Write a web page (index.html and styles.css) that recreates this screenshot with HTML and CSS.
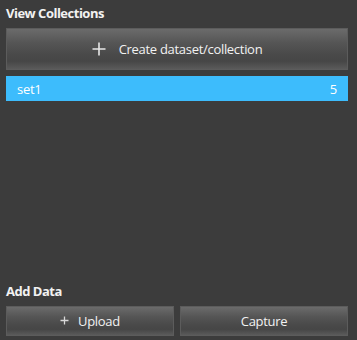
FILE: index.html
```html
<!DOCTYPE html>
<html>
<head>
  <meta charset="utf-8">
  <title>Collections</title>
  <link rel="stylesheet" href="styles.css">
</head>
<body>
  <div class="panel">
    <h2 class="title">View Collections</h2>
    <button class="btn btn-big">
      <svg class="plus" width="14" height="14" viewBox="0 0 14 14"><path d="M7 0.5V13.5M0.5 7H13.5" stroke="#e8e8e8" stroke-width="1.6"/></svg>
      Create dataset/collection
    </button>

    <div class="collection selected">
      <span>set1</span>
      <span class="count">5</span>
    </div>

    <div class="add-data">
      <h2 class="title">Add Data</h2>
      <div class="btn-row">
        <button class="btn">
          <svg class="plus small" width="9" height="9" viewBox="0 0 9 9"><path d="M4.5 0.5V8.5M0.5 4.5H8.5" stroke="#d8d8d8" stroke-width="1.3"/></svg>
          Upload
        </button>
        <button class="btn">Capture</button>
      </div>
    </div>
  </div>
</body>
</html>
```

FILE: styles.css
```css
html, body {
  margin: 0;
  padding: 0;
  background: #3c3c3c;
}

body {
  font-family: "Open Sans", "DejaVu Sans", sans-serif;
  color: #f0f0f0;
}

.panel {
  display: flex;
  flex-direction: column;
  box-sizing: border-box;
  height: 340px;
  padding: 5px 9px 4px 6px;
}

.title {
  margin: 0 0 7px;
  font-size: 13px;
  line-height: 16px;
  font-weight: 700;
  letter-spacing: -0.5px;
  color: #f2f2f2;
}

.btn {
  display: flex;
  align-items: center;
  justify-content: center;
  gap: 10px;
  box-sizing: border-box;
  height: 30px;
  padding: 0;
  border: 1px solid #5c5c5c;
  background: linear-gradient(#6b6b6b 0%, #555 35%, #494949 65%, #464646 80%, #5a5a5a 100%);
  color: #f2f2f2;
  font-family: inherit;
  font-size: 13px;
  letter-spacing: -0.3px;
  cursor: pointer;
}

.btn-big {
  height: 42px;
  gap: 13px;
}

.plus.small {
  margin-top: -2px;
}

.collection {
  display: flex;
  justify-content: space-between;
  align-items: center;
  height: 25px;
  margin-top: 6px;
  padding: 0 11px 0 11px;
  font-size: 13px;
  letter-spacing: -0.3px;
}

.collection.selected {
  background: #3dbcfc;
  color: #fff;
}

.add-data {
  margin-top: auto;
}

.btn-row {
  display: flex;
  gap: 6px;
}

.btn-row .btn {
  flex: 1;
  gap: 9px;
}
```
